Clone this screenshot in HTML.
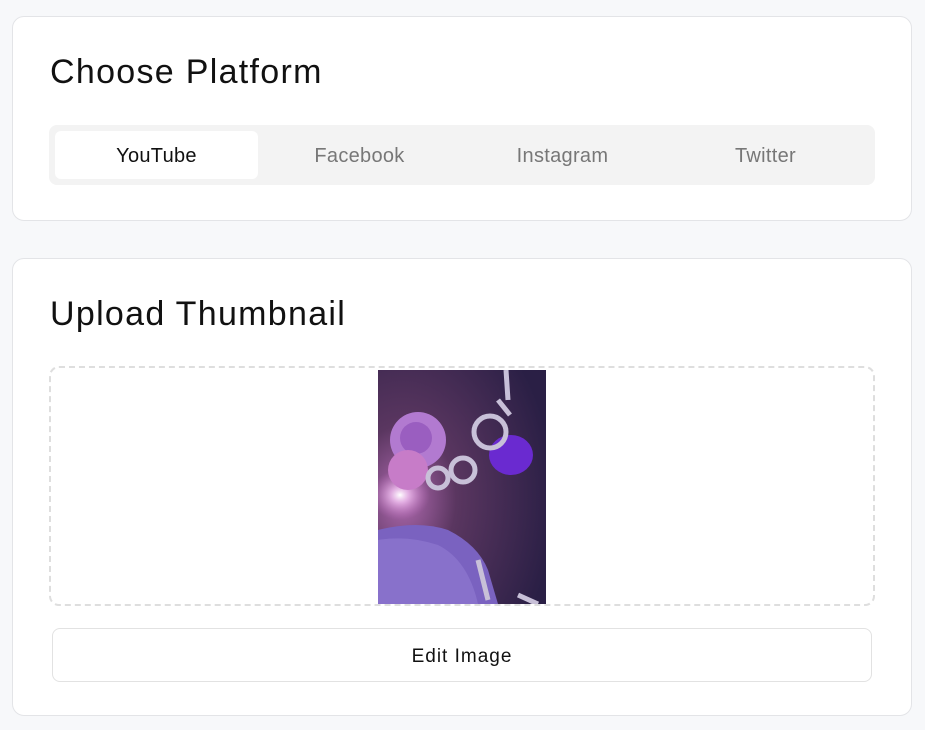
<!DOCTYPE html>
<html><head><style>
*{box-sizing:border-box;margin:0;padding:0}
body{width:925px;height:730px;background:#f7f8fa;font-family:"Liberation Sans",sans-serif;position:relative;overflow:hidden}
.card{position:absolute;left:12px;width:900px;background:#fff;border:1px solid #e3e4e7;border-radius:12px}
h2{position:absolute;left:37px;font-weight:400;font-size:34px;color:#111;letter-spacing:1.3px}
.tabs{position:absolute;left:36px;top:108px;width:826px;height:60px;background:#f3f3f3;border-radius:8px}
.tab{position:absolute;top:6px;width:203px;height:48px;line-height:50px;text-align:center;font-size:20px;color:#777;letter-spacing:0.3px}
.tab.a{background:#fff;color:#111;border-radius:6px}
.zone{position:absolute;left:36px;top:107px;width:826px;height:240px;border:2px dashed #dedede;border-radius:10px}
.btn{position:absolute;left:39px;top:369px;width:820px;height:54px;border:1px solid #e2e2e2;border-radius:8px;text-align:center;line-height:56px;font-size:19px;color:#111;letter-spacing:1px}
</style></head><body>
<div class="card" style="top:16px;height:205px">
<h2 style="top:36px">Choose Platform</h2>
<div class="tabs">
<div class="tab a" style="left:6px">YouTube</div>
<div class="tab" style="left:209px">Facebook</div>
<div class="tab" style="left:412px">Instagram</div>
<div class="tab" style="left:615px">Twitter</div>
</div></div>
<div class="card" style="top:258px;height:458px">
<h2 style="top:36px">Upload Thumbnail</h2>
<div class="zone"></div>
<svg style="position:absolute;left:365px;top:111px" width="168" height="234" viewBox="0 0 168 234">
<defs>
<radialGradient id="bg" cx="0.15" cy="0.55" r="0.9"><stop offset="0" stop-color="#b06ab0"/><stop offset="0.35" stop-color="#5a3660"/><stop offset="1" stop-color="#2a1f45"/></radialGradient>
<radialGradient id="gl" cx="0.5" cy="0.5" r="0.5"><stop offset="0" stop-color="#fff"/><stop offset="0.3" stop-color="#f0c0f0" stop-opacity="0.8"/><stop offset="1" stop-color="#c070c0" stop-opacity="0"/></radialGradient>
</defs>
<rect width="168" height="234" fill="url(#bg)"/>
<ellipse cx="22" cy="125" rx="30" ry="25" fill="url(#gl)"/>
<path d="M0 160 Q40 150 70 160 Q100 175 110 200 L120 234 L0 234 Z" fill="#7a62c0"/>
<path d="M0 170 Q30 165 60 175 Q90 190 100 234 L0 234 Z" fill="#8f78d0" opacity="0.7"/>
<circle cx="40" cy="70" r="28" fill="#b27ad0"/>
<circle cx="38" cy="68" r="16" fill="#9a5ec0"/>
<circle cx="30" cy="100" r="20" fill="#c77cc8"/>
<ellipse cx="133" cy="85" rx="22" ry="20" fill="#6a2ad0"/>
<g fill="none" stroke="#c8c0d8" stroke-width="5">
<circle cx="112" cy="62" r="16"/>
<circle cx="85" cy="100" r="12"/>
<circle cx="60" cy="108" r="10"/>
<path d="M128 0 L130 30 M120 30 L132 45"/>
<path d="M100 190 L110 230 M140 225 L160 234"/>
</g>
</svg>
<div class="btn">Edit Image</div>
</div>
</body></html>
